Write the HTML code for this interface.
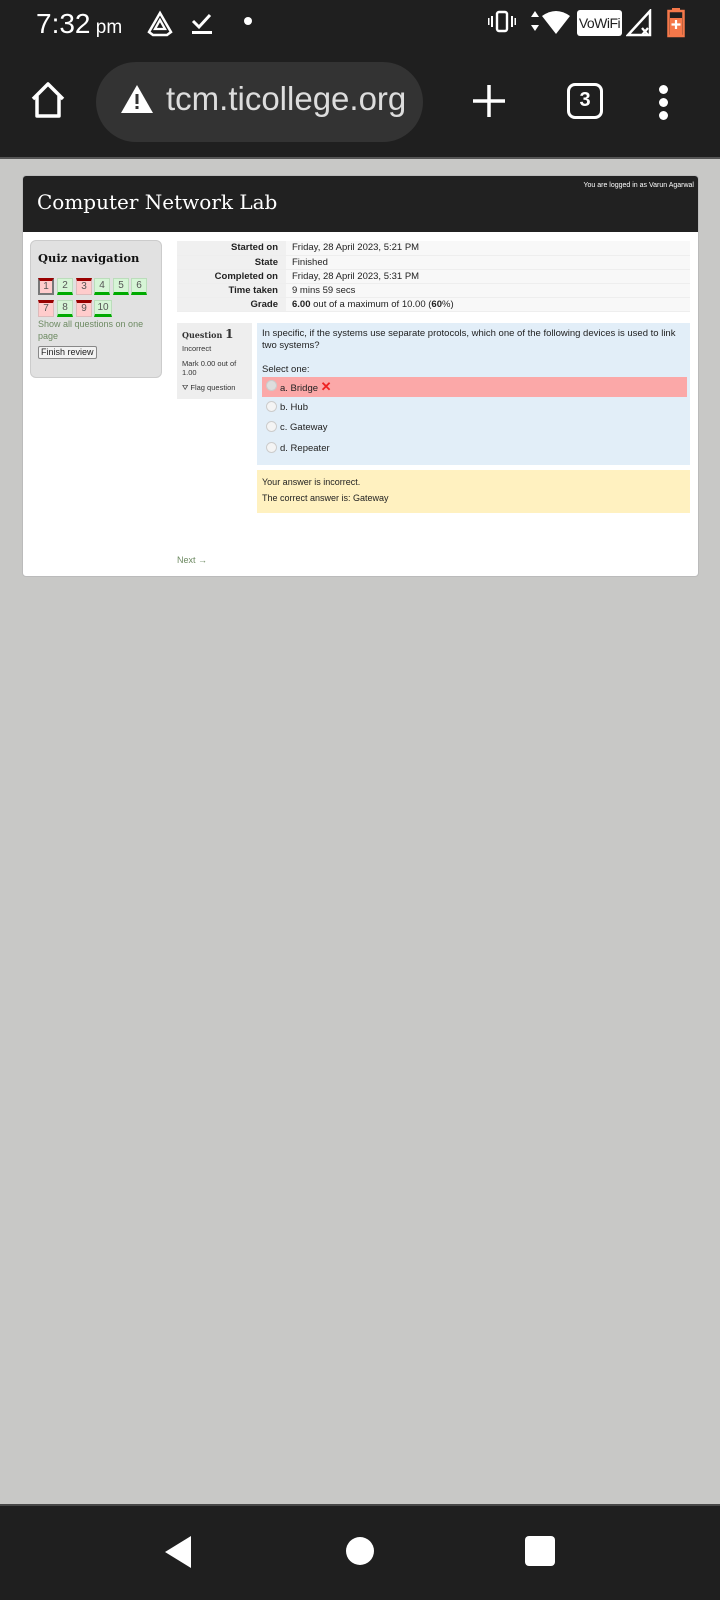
<!DOCTYPE html>
<html><head><meta charset="utf-8"><style>
*{margin:0;padding:0;box-sizing:border-box}
body{width:720px;height:1600px;background:#c8c8c6;position:relative;overflow:hidden;font-family:"Liberation Sans",sans-serif;color:#222}
.abs{position:absolute}
#top{left:0;top:0;width:720px;height:157px;background:#1f1f1f}
#line{left:0;top:157px;width:720px;height:2px;background:#555}
#nav{left:0;top:1504px;width:720px;height:96px;background:#1f1f1f;border-top:2px solid #474747}
#card{left:22px;top:175px;width:677px;height:402px;background:#fff;border:1px solid #bbb;border-radius:4px;overflow:hidden}
#hdr{left:0;top:0;width:677px;height:56px;background:#212121}
.nb{position:absolute;width:16px;height:17px;font-size:10px;text-align:center;line-height:14px;color:#555}
.g{background:#d6f5d6;border:1px solid #bdb;border-bottom:3px solid #0a0}
.r{background:#fcc;border:1px solid #dbb;border-top:3px solid #900;line-height:12px}
table{border-collapse:collapse;font-size:9.5px}
td{height:14px;border-bottom:1px solid #eee}
td.l{background:#f0f0f0;text-align:right;font-weight:bold;padding-right:8px;width:109px}
td.v{background:#f8f8f8;padding-left:6px}
.rad{position:absolute;left:4px;width:11px;height:11px;border-radius:50%;border:1px solid #ccc;background:#f4f4f4}
.opt{position:absolute;left:0;width:425px;height:20px;font-size:9.5px;line-height:20px;padding-left:18px}
</style></head><body>
<div id="top" class="abs">
 <div class="abs" style="left:36px;top:8px;color:#fff;font-size:28px">7:32<span style="font-size:19px"> pm</span></div>
 <svg class="abs" style="left:146px;top:10px" width="28" height="28" viewBox="0 0 28 28"><path d="M14 3 L25 22 L21 25 H7 L3 22Z" fill="none" stroke="#fff" stroke-width="2.5"/><path d="M14 10 L19 19 H9Z" fill="none" stroke="#fff" stroke-width="2.3"/></svg>
 <svg class="abs" style="left:190px;top:10px" width="24" height="26"><path d="M3 11 L9 17 L20 5" fill="none" stroke="#fff" stroke-width="3"/><rect x="2" y="21" width="20" height="3" fill="#fff"/></svg>
 <div class="abs" style="left:244px;top:17px;width:8px;height:8px;border-radius:50%;background:#fff"></div>
 <svg class="abs" style="left:488px;top:10px" width="28" height="24"><rect x="9" y="2" width="10" height="19" rx="2" fill="none" stroke="#fff" stroke-width="2.4"/><rect x="3" y="6" width="2" height="11" fill="#fff"/><rect x="23" y="6" width="2" height="11" fill="#fff"/><rect x="0" y="8" width="1.5" height="7" fill="#fff"/><rect x="26.5" y="8" width="1.5" height="7" fill="#fff"/></svg>
 <svg class="abs" style="left:530px;top:8px" width="42" height="28"><path d="M5 3 L9 9 H1Z M5 23 L1 17 H9Z" fill="#fff"/><path d="M12 8 Q26 -2 40 8 L26 26Z" fill="#fff"/></svg>
 <div class="abs" style="left:577px;top:10px;width:45px;height:26px;background:#fff;border-radius:3px;color:#1f1f1f;font-size:14px;line-height:26px;text-align:center;letter-spacing:-0.5px;overflow:hidden">VoWiFi</div>
 <svg class="abs" style="left:626px;top:9px" width="28" height="28"><path d="M24 2 V26 H2Z" fill="none" stroke="#fff" stroke-width="2.5"/><path d="M16 19 L22 26 M22 19 L16 26" stroke="#fff" stroke-width="2.3"/></svg>
 <svg class="abs" style="left:667px;top:8px" width="18" height="30"><rect x="5" y="0" width="8" height="3" fill="#f5784a"/><rect x="1.5" y="3" width="15" height="25" fill="none" stroke="#f5784a" stroke-width="2.5"/><rect x="3" y="10" width="12" height="17" fill="#f5784a"/><path d="M9 12 V21 M4.5 16.5 H13.5" stroke="#fff" stroke-width="2.2"/></svg>
 <svg class="abs" style="left:28px;top:80px" width="40" height="40"><path d="M5 19 L20 4 L35 19 M9 16 V36 H31 V16" fill="none" stroke="#fff" stroke-width="3.5" stroke-linejoin="round"/></svg>
 <div class="abs" style="left:96px;top:62px;width:327px;height:80px;border-radius:40px;background:#333"></div>
 <svg class="abs" style="left:120px;top:84px" width="34" height="30"><path d="M17 1 L33 29 H1Z" fill="#fff"/><rect x="15.5" y="10" width="3" height="10" fill="#333"/><rect x="15.5" y="22" width="3" height="3" fill="#333"/></svg>
 <div class="abs" style="left:166px;top:80px;color:#ddd;font-size:33px">tcm.ticollege.org</div>
 <svg class="abs" style="left:472px;top:84px" width="34" height="34"><path d="M17 1 V33 M1 17 H33" stroke="#fff" stroke-width="3.5"/></svg>
 <div class="abs" style="left:567px;top:83px;width:36px;height:36px;border:3.5px solid #fff;border-radius:8px;color:#fff;font-size:20px;font-weight:bold;text-align:center;line-height:29px">3</div>
 <div class="abs" style="left:659px;top:85px;width:9px;height:9px;border-radius:50%;background:#fff"></div>
 <div class="abs" style="left:659px;top:98px;width:9px;height:9px;border-radius:50%;background:#fff"></div>
 <div class="abs" style="left:659px;top:111px;width:9px;height:9px;border-radius:50%;background:#fff"></div>
</div>
<div id="line" class="abs"></div>
<div id="card" class="abs">
 <div id="hdr" class="abs">
  <div class="abs" style="right:6px;top:6px;color:#fff;font-size:7px">You are logged in as Varun Agarwal</div>
  <div class="abs" style="left:14px;top:14px;color:#fff;font-family:'DejaVu Serif',serif;font-size:20px">Computer Network Lab</div>
 </div>
 <div class="abs" style="left:7px;top:64px;width:132px;height:138px;background:#e1e1e1;border:1px solid #ccc;border-radius:6px">
  <div class="abs" style="left:7px;top:10px;font-family:'DejaVu Serif',serif;font-weight:bold;font-size:11.5px;color:#111">Quiz navigation</div>
  <div class="nb r" style="left:7px;top:37px;border:2px solid #777;border-top:3px solid #900">1</div>
  <div class="nb g" style="left:26px;top:37px">2</div>
  <div class="nb r" style="left:45px;top:37px">3</div>
  <div class="nb g" style="left:63px;top:37px">4</div>
  <div class="nb g" style="left:82px;top:37px">5</div>
  <div class="nb g" style="left:100px;top:37px">6</div>
  <div class="nb r" style="left:7px;top:59px">7</div>
  <div class="nb g" style="left:26px;top:59px">8</div>
  <div class="nb r" style="left:45px;top:59px">9</div>
  <div class="nb g" style="left:63px;top:59px;width:18px">10</div>
  <div class="abs" style="left:7px;top:77px;width:120px;font-size:9px;line-height:12px;color:#6d8a62">Show all questions on one page</div>
  <div class="abs" style="left:7px;top:105px;font-size:9px;border:1px solid #888;border-radius:2px;background:#f2f2f2;padding:0 2px;line-height:11px">Finish review</div>
 </div>
 <table class="abs" style="left:154px;top:65px;width:513px">
  <tr><td class="l">Started on</td><td class="v">Friday, 28 April 2023, 5:21 PM</td></tr>
  <tr><td class="l">State</td><td class="v">Finished</td></tr>
  <tr><td class="l">Completed on</td><td class="v">Friday, 28 April 2023, 5:31 PM</td></tr>
  <tr><td class="l">Time taken</td><td class="v">9 mins 59 secs</td></tr>
  <tr><td class="l">Grade</td><td class="v"><b>6.00</b> out of a maximum of 10.00 (<b>60</b>%)</td></tr>
 </table>
 <div class="abs" style="left:154px;top:147px;width:75px;height:76px;background:#eee;font-size:7.5px;color:#333;padding:4px 5px">
  <div style="font-family:'DejaVu Serif',serif;font-size:8px;font-weight:bold">Question <span style="font-size:12px">1</span></div>
  <div style="margin-top:3px">Incorrect</div>
  <div style="margin-top:6px;line-height:9px">Mark 0.00 out of 1.00</div>
  <div style="margin-top:6px">⛛ Flag question</div>
 </div>
 <div class="abs" style="left:234px;top:147px;width:433px;height:142px;background:#e2eef8;font-size:9.5px;padding:5px 5px">
  <div style="line-height:12px">In specific, if the systems use separate protocols, which one of the following devices is used to link two systems?</div>
  <div class="abs" style="left:5px;top:41px">Select one:</div>
  <div class="opt" style="left:5px;top:54px;background:#fba8a8"><div class="rad" style="top:3px;background:#ddd"></div>a. Bridge <span style="color:#e22;font-weight:bold;font-size:13px">✕</span></div>
  <div class="opt" style="left:5px;top:75px"><div class="rad" style="top:3px"></div>b. Hub</div>
  <div class="opt" style="left:5px;top:95px"><div class="rad" style="top:3px"></div>c. Gateway</div>
  <div class="opt" style="left:5px;top:116px"><div class="rad" style="top:3px"></div>d. Repeater</div>
 </div>
 <div class="abs" style="left:234px;top:294px;width:433px;height:43px;background:#fff1c0;font-size:9px;padding:4px 5px;line-height:16px">
  <div>Your answer is incorrect.</div><div>The correct answer is: Gateway</div>
 </div>
 <div class="abs" style="left:154px;top:379px;font-size:9px;color:#6d8a62">Next →</div>
</div>
<div id="nav" class="abs">
 <svg class="abs" style="left:163px;top:29px" width="30" height="34"><path d="M28 1 V33 L2 17Z" fill="#fff"/></svg>
 <div class="abs" style="left:346px;top:31px;width:28px;height:28px;border-radius:50%;background:#fff"></div>
 <div class="abs" style="left:525px;top:30px;width:30px;height:30px;border-radius:4px;background:#fff"></div>
</div>
</body></html>
